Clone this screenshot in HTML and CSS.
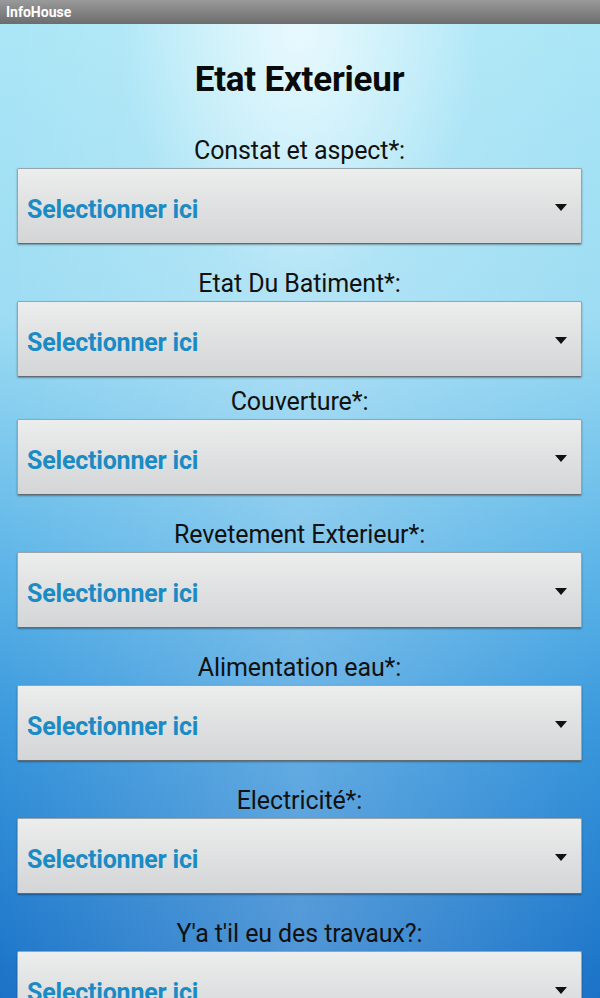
FILE: index.html
```html
<!DOCTYPE html>
<html lang="fr">
<head>
    <meta charset="UTF-8">
    <meta name="viewport" content="width=device-width, initial-scale=1.0">
    <title>InfoHouse</title>
    <link rel="stylesheet" href="styles.css">
</head>
<body>
    <div class="statusbar">InfoHouse</div>

    <div class="screen">
        <h1 class="title">Etat Exterieur</h1>

        <div class="field">
            <label class="field-label">Constat et aspect*:</label>
            <div class="picker">
                <span class="picker-text">Selectionner ici</span>
                <svg class="picker-arrow" width="12" height="7" viewBox="0 0 12 7"><path d="M0 0H12L6 7Z" fill="#111"/></svg>
            </div>
        </div>

        <div class="field">
            <label class="field-label">Etat Du Batiment*:</label>
            <div class="picker">
                <span class="picker-text">Selectionner ici</span>
                <svg class="picker-arrow" width="12" height="7" viewBox="0 0 12 7"><path d="M0 0H12L6 7Z" fill="#111"/></svg>
            </div>
        </div>

        <div class="field tight">
            <label class="field-label">Couverture*:</label>
            <div class="picker">
                <span class="picker-text">Selectionner ici</span>
                <svg class="picker-arrow" width="12" height="7" viewBox="0 0 12 7"><path d="M0 0H12L6 7Z" fill="#111"/></svg>
            </div>
        </div>

        <div class="field">
            <label class="field-label">Revetement Exterieur*:</label>
            <div class="picker">
                <span class="picker-text">Selectionner ici</span>
                <svg class="picker-arrow" width="12" height="7" viewBox="0 0 12 7"><path d="M0 0H12L6 7Z" fill="#111"/></svg>
            </div>
        </div>

        <div class="field">
            <label class="field-label">Alimentation eau*:</label>
            <div class="picker">
                <span class="picker-text">Selectionner ici</span>
                <svg class="picker-arrow" width="12" height="7" viewBox="0 0 12 7"><path d="M0 0H12L6 7Z" fill="#111"/></svg>
            </div>
        </div>

        <div class="field">
            <label class="field-label">Electricité*:</label>
            <div class="picker">
                <span class="picker-text">Selectionner ici</span>
                <svg class="picker-arrow" width="12" height="7" viewBox="0 0 12 7"><path d="M0 0H12L6 7Z" fill="#111"/></svg>
            </div>
        </div>

        <div class="field">
            <label class="field-label">Y'a t'il eu des travaux?:</label>
            <div class="picker">
                <span class="picker-text">Selectionner ici</span>
                <svg class="picker-arrow" width="12" height="7" viewBox="0 0 12 7"><path d="M0 0H12L6 7Z" fill="#111"/></svg>
            </div>
        </div>
    </div>
</body>
</html>
```

FILE: styles.css
```css
html, body {
    margin: 0;
    height: 100%;
    overflow: hidden;
}
body {
    font-family: Roboto, "Noto Sans", sans-serif;
    background: #1a74c8;
}
.statusbar {
    height: 24px;
    line-height: 24px;
    padding-left: 6px;
    font-size: 14px;
    font-weight: bold;
    color: #fff;
    background: linear-gradient(#9a9a9a, #6c6c6c);
}
.screen {
    height: 974px;
    overflow: hidden;
    display: flex;
    flex-direction: column;
    padding: 0 18px 0 17px;
    background:
        radial-gradient(ellipse 180px 260px at 50% 0, rgba(240, 252, 255, 0.85), rgba(240, 252, 255, 0) 100%),
        linear-gradient(90deg, rgba(255, 255, 255, 0) 0%, rgba(255, 255, 255, 0.22) 50%, rgba(255, 255, 255, 0) 100%),
        linear-gradient(#aae6f6 0%, #9ddcf3 30%, #5fb6e8 55%, #3a98dc 72%, #1b72c7 100%);
}
.title {
    margin: 36px 0 11px;
    height: 40px;
    line-height: 40px;
    font-size: 35px;
    font-weight: bold;
    text-align: center;
    color: #0a0a0a;
    letter-spacing: -0.2px;
}
.field {
    display: flex;
    flex-direction: column;
    margin-top: 25px;
}
.field.tight {
    margin-top: 10px;
}
.field-label {
    height: 30px;
    line-height: 30px;
    font-size: 25px;
    text-align: center;
    color: #111;
    letter-spacing: -0.1px;
}
.picker {
    margin-top: 2px;
    display: flex;
    align-items: center;
    padding: 6px 14px 0 9px;
    box-sizing: border-box;
    height: 76px;
    border: 1px solid #9aa5aa;
    border-bottom-color: #5f6b70;
    border-radius: 2px;
    background: linear-gradient(#eceded, #d3d5d6);
    box-shadow: 0 1px 2px rgba(0, 0, 0, 0.35);
}
.picker-text {
    flex: 1;
    font-size: 25px;
    font-weight: bold;
    color: #1a8bc4;
    letter-spacing: -0.2px;
}
.picker-arrow {
    margin-top: -4px;
}
```
